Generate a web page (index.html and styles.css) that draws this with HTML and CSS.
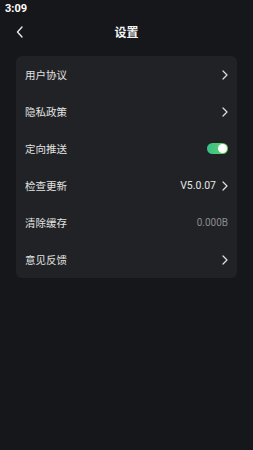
FILE: index.html
```html
<!DOCTYPE html>
<html lang="zh-CN">
<head>
    <meta charset="UTF-8">
    <meta name="viewport" content="width=device-width, initial-scale=1.0">
    <title>设置</title>
    <link rel="stylesheet" href="styles.css">
</head>
<body>

    <div class="status-bar">3:09</div>

    <!-- Header -->
    <div class="header">
        <svg class="back" width="10" height="12" viewBox="0 0 10 12">
            <path d="M7 1 L2.5 6 L7 11" fill="none" stroke="#e8e8e8" stroke-width="1.4" stroke-linecap="round" stroke-linejoin="round"/>
        </svg>
        <h1>设置</h1>
    </div>

    <div class="settings-card">
        <div class="row">
            <span class="label">用户协议</span>
            <span class="right">
                <svg class="arrow" width="6" height="10" viewBox="0 0 6 10"><path d="M1 1 L5 5 L1 9" fill="none" stroke="#e0e0e0" stroke-width="1.2" stroke-linecap="round" stroke-linejoin="round"/></svg>
            </span>
        </div>
        <div class="row">
            <span class="label">隐私政策</span>
            <span class="right">
                <svg class="arrow" width="6" height="10" viewBox="0 0 6 10"><path d="M1 1 L5 5 L1 9" fill="none" stroke="#e0e0e0" stroke-width="1.2" stroke-linecap="round" stroke-linejoin="round"/></svg>
            </span>
        </div>
        <div class="row">
            <span class="label">定向推送</span>
            <span class="right">
                <span class="toggle"><span class="knob"></span></span>
            </span>
        </div>
        <div class="row">
            <span class="label">检查更新</span>
            <span class="right">
                <span class="version">V5.0.07</span>
                <svg class="arrow" width="6" height="10" viewBox="0 0 6 10"><path d="M1 1 L5 5 L1 9" fill="none" stroke="#e0e0e0" stroke-width="1.2" stroke-linecap="round" stroke-linejoin="round"/></svg>
            </span>
        </div>
        <div class="row">
            <span class="label">清除缓存</span>
            <span class="right">
                <span class="cache">0.000B</span>
            </span>
        </div>
        <div class="row">
            <span class="label">意见反馈</span>
            <span class="right">
                <svg class="arrow" width="6" height="10" viewBox="0 0 6 10"><path d="M1 1 L5 5 L1 9" fill="none" stroke="#e0e0e0" stroke-width="1.2" stroke-linecap="round" stroke-linejoin="round"/></svg>
            </span>
        </div>
    </div>

</body>
</html>
```

FILE: styles.css
```css
body {
    margin: 0;
    background: #16171b;
    font-family: "Noto Sans CJK SC", "Noto Sans", sans-serif;
    color: #e6e6e6;
    width: 253px;
    height: 450px;
    overflow: hidden;
}

.status-bar {
    height: 17px;
    padding-left: 5px;
    font-family: Roboto, "Noto Sans", sans-serif;
    font-size: 11px;
    font-weight: bold;
    line-height: 17px;
    color: #ffffff;
}

.header {
    height: 28px;
    display: flex;
    align-items: center;
    justify-content: center;
    position: relative;
}

.back {
    position: absolute;
    left: 15px;
    top: 9px;
}

h1 {
    margin: 0;
    font-size: 12px;
    font-weight: bold;
    color: #f2f2f2;
}

.settings-card {
    margin: 11px 16px 0;
    background: #212225;
    border-radius: 6px;
    padding: 0 9px;
}

.row {
    height: 37px;
    display: flex;
    align-items: center;
    justify-content: space-between;
}

.label {
    font-size: 10.5px;
    color: #e2e2e2;
}

.right {
    display: flex;
    align-items: center;
    gap: 6px;
}

.arrow {
    display: block;
}

.version {
    font-family: Roboto, "Noto Sans", sans-serif;
    font-size: 10.5px;
    color: #e6e6e6;
}

.cache {
    font-family: Roboto, "Noto Sans", sans-serif;
    font-size: 10px;
    color: #8a8b8f;
}

.toggle {
    width: 21px;
    height: 11px;
    box-sizing: border-box;
    border-radius: 6px;
    background: linear-gradient(to right, #35c08c, #68d25f);
    display: flex;
    align-items: center;
    justify-content: flex-end;
    padding: 0 1px;
}

.knob {
    width: 9px;
    height: 9px;
    border-radius: 50%;
    background: #ffffff;
}
```
